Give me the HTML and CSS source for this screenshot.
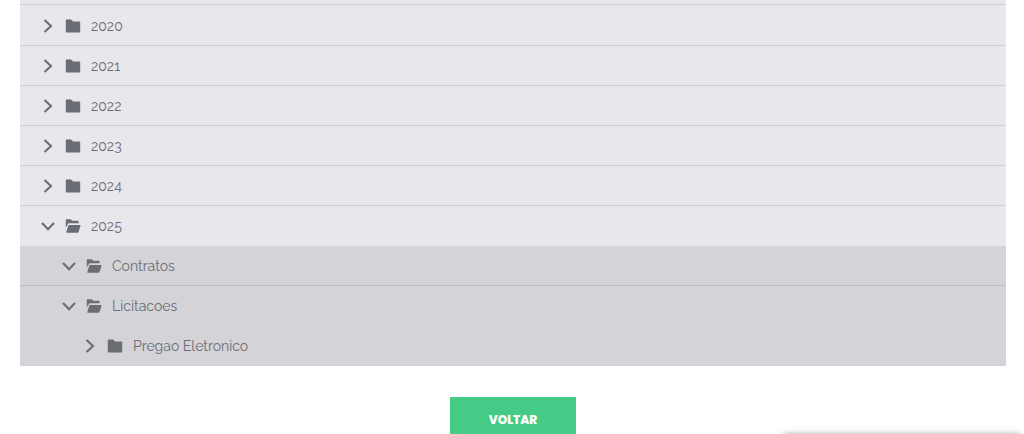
FILE: index.html
```html
<!DOCTYPE html>
<html lang="pt-BR">
<head>
    <meta charset="UTF-8">
    <meta name="viewport" content="width=device-width, initial-scale=1.0">
    <title>Arquivos</title>
    <link rel="stylesheet" href="styles.css">
</head>
<body>
    <svg class="sprite" aria-hidden="true">
        <symbol id="chevron-right" viewBox="0 0 16 16">
            <path d="M4.5 2 11 8 4.5 14" fill="none" stroke="currentColor" stroke-width="2.1"/>
        </symbol>
        <symbol id="chevron-down" viewBox="0 0 16 16">
            <path d="M2 5 8 11.3 14 5" fill="none" stroke="currentColor" stroke-width="2.1"/>
        </symbol>
        <symbol id="folder" viewBox="0 0 16 16">
            <path d="M1.4 1.5h4.8l1.9 2h6.5q.6 0 .6.6V14q0 .6-.6.6H1.4q-.6 0-.6-.6V2.1q0-.6.6-.6z" fill="currentColor"/>
        </symbol>
        <symbol id="folder-open" viewBox="0 0 16 16">
            <path d="M1 1.2h4.6l1.5 1.6H13q.6 0 .6.6V5.2H3.4L.8 9.4V1.5z" fill="currentColor"/>
            <path d="M4.2 7h11q.5 0 .3.7l-1.9 6.4q-.2.6-.9.6H1.8q-.7 0-.5-.7l2-6.4q.2-.6.9-.6z" fill="currentColor"/>
        </symbol>
    </svg>

    <main class="container">
        <ul class="tree">
            <li><a class="row" href="#"><svg class="chevron"><use href="#chevron-right"/></svg><svg class="folder"><use href="#folder"/></svg>2020</a></li>
            <li><a class="row" href="#"><svg class="chevron"><use href="#chevron-right"/></svg><svg class="folder"><use href="#folder"/></svg>2021</a></li>
            <li><a class="row" href="#"><svg class="chevron"><use href="#chevron-right"/></svg><svg class="folder"><use href="#folder"/></svg>2022</a></li>
            <li><a class="row" href="#"><svg class="chevron"><use href="#chevron-right"/></svg><svg class="folder"><use href="#folder"/></svg>2023</a></li>
            <li><a class="row" href="#"><svg class="chevron"><use href="#chevron-right"/></svg><svg class="folder"><use href="#folder"/></svg>2024</a></li>
            <li>
                <a class="row open" href="#"><svg class="chevron"><use href="#chevron-down"/></svg><svg class="folder"><use href="#folder-open"/></svg>2025</a>
                <ul class="level-2">
                    <li><a class="row" href="#"><svg class="chevron"><use href="#chevron-down"/></svg><svg class="folder"><use href="#folder-open"/></svg>Contratos</a></li>
                    <li>
                        <a class="row open" href="#"><svg class="chevron"><use href="#chevron-down"/></svg><svg class="folder"><use href="#folder-open"/></svg>Licitacoes</a>
                        <ul class="level-3">
                            <li><a class="row open" href="#"><svg class="chevron"><use href="#chevron-right"/></svg><svg class="folder"><use href="#folder"/></svg>Pregao Eletronico</a></li>
                        </ul>
                    </li>
                </ul>
            </li>
        </ul>

        <button class="back" type="button">VOLTAR</button>
    </main>

    <div class="widget"></div>
</body>
</html>
```

FILE: styles.css
```css
body {
    font-family: Raleway, Lato, sans-serif;
    margin: 0;
    background: #fff;
    color: #6b6d75;
}
.sprite {
    display: none;
}
.container {
    margin: 0 18px 0 20px;
    text-align: center;
}
ul {
    list-style: none;
    margin: 0;
    padding: 0;
}
.tree {
    background: #e8e7ec;
    text-align: left;
}
.tree::before {
    content: "";
    display: block;
    height: 4px;
    border-bottom: 1px solid #cfced3;
    margin-bottom: 1px;
}
.row {
    display: flex;
    align-items: center;
    box-sizing: border-box;
    height: 40px;
    padding-left: 20px;
    border-bottom: 1px solid #cfced3;
    color: inherit;
    font-size: 14px;
    text-decoration: none;
}
.row.open {
    border-bottom-color: transparent;
}
.chevron {
    width: 16px;
    height: 16px;
    margin-right: 9px;
}
.folder {
    width: 16px;
    height: 16px;
    margin-right: 10px;
}
.level-2 {
    background: #d4d3d8;
}
.level-2 .row {
    padding-left: 41px;
    border-bottom-color: #bfbec4;
}
.level-2 .row.open {
    border-bottom-color: transparent;
}
.level-3 .row {
    padding-left: 62px;
}
.back {
    margin: 31px 0 0;
    padding: 13px 39px;
    border: 0;
    background: #45cb85;
    color: #fff;
    font-family: Poppins, Inter, sans-serif;
    font-size: 12px;
    font-weight: 800;
    line-height: 20px;
    cursor: pointer;
}
/* floating box resting just under the window edge */
.widget {
    position: fixed;
    top: 100%;
    right: 4px;
    width: 236px;
    height: 40px;
    background: #fff;
    box-shadow: 0 0 6px rgba(0, 0, 0, 0.35);
}
```
